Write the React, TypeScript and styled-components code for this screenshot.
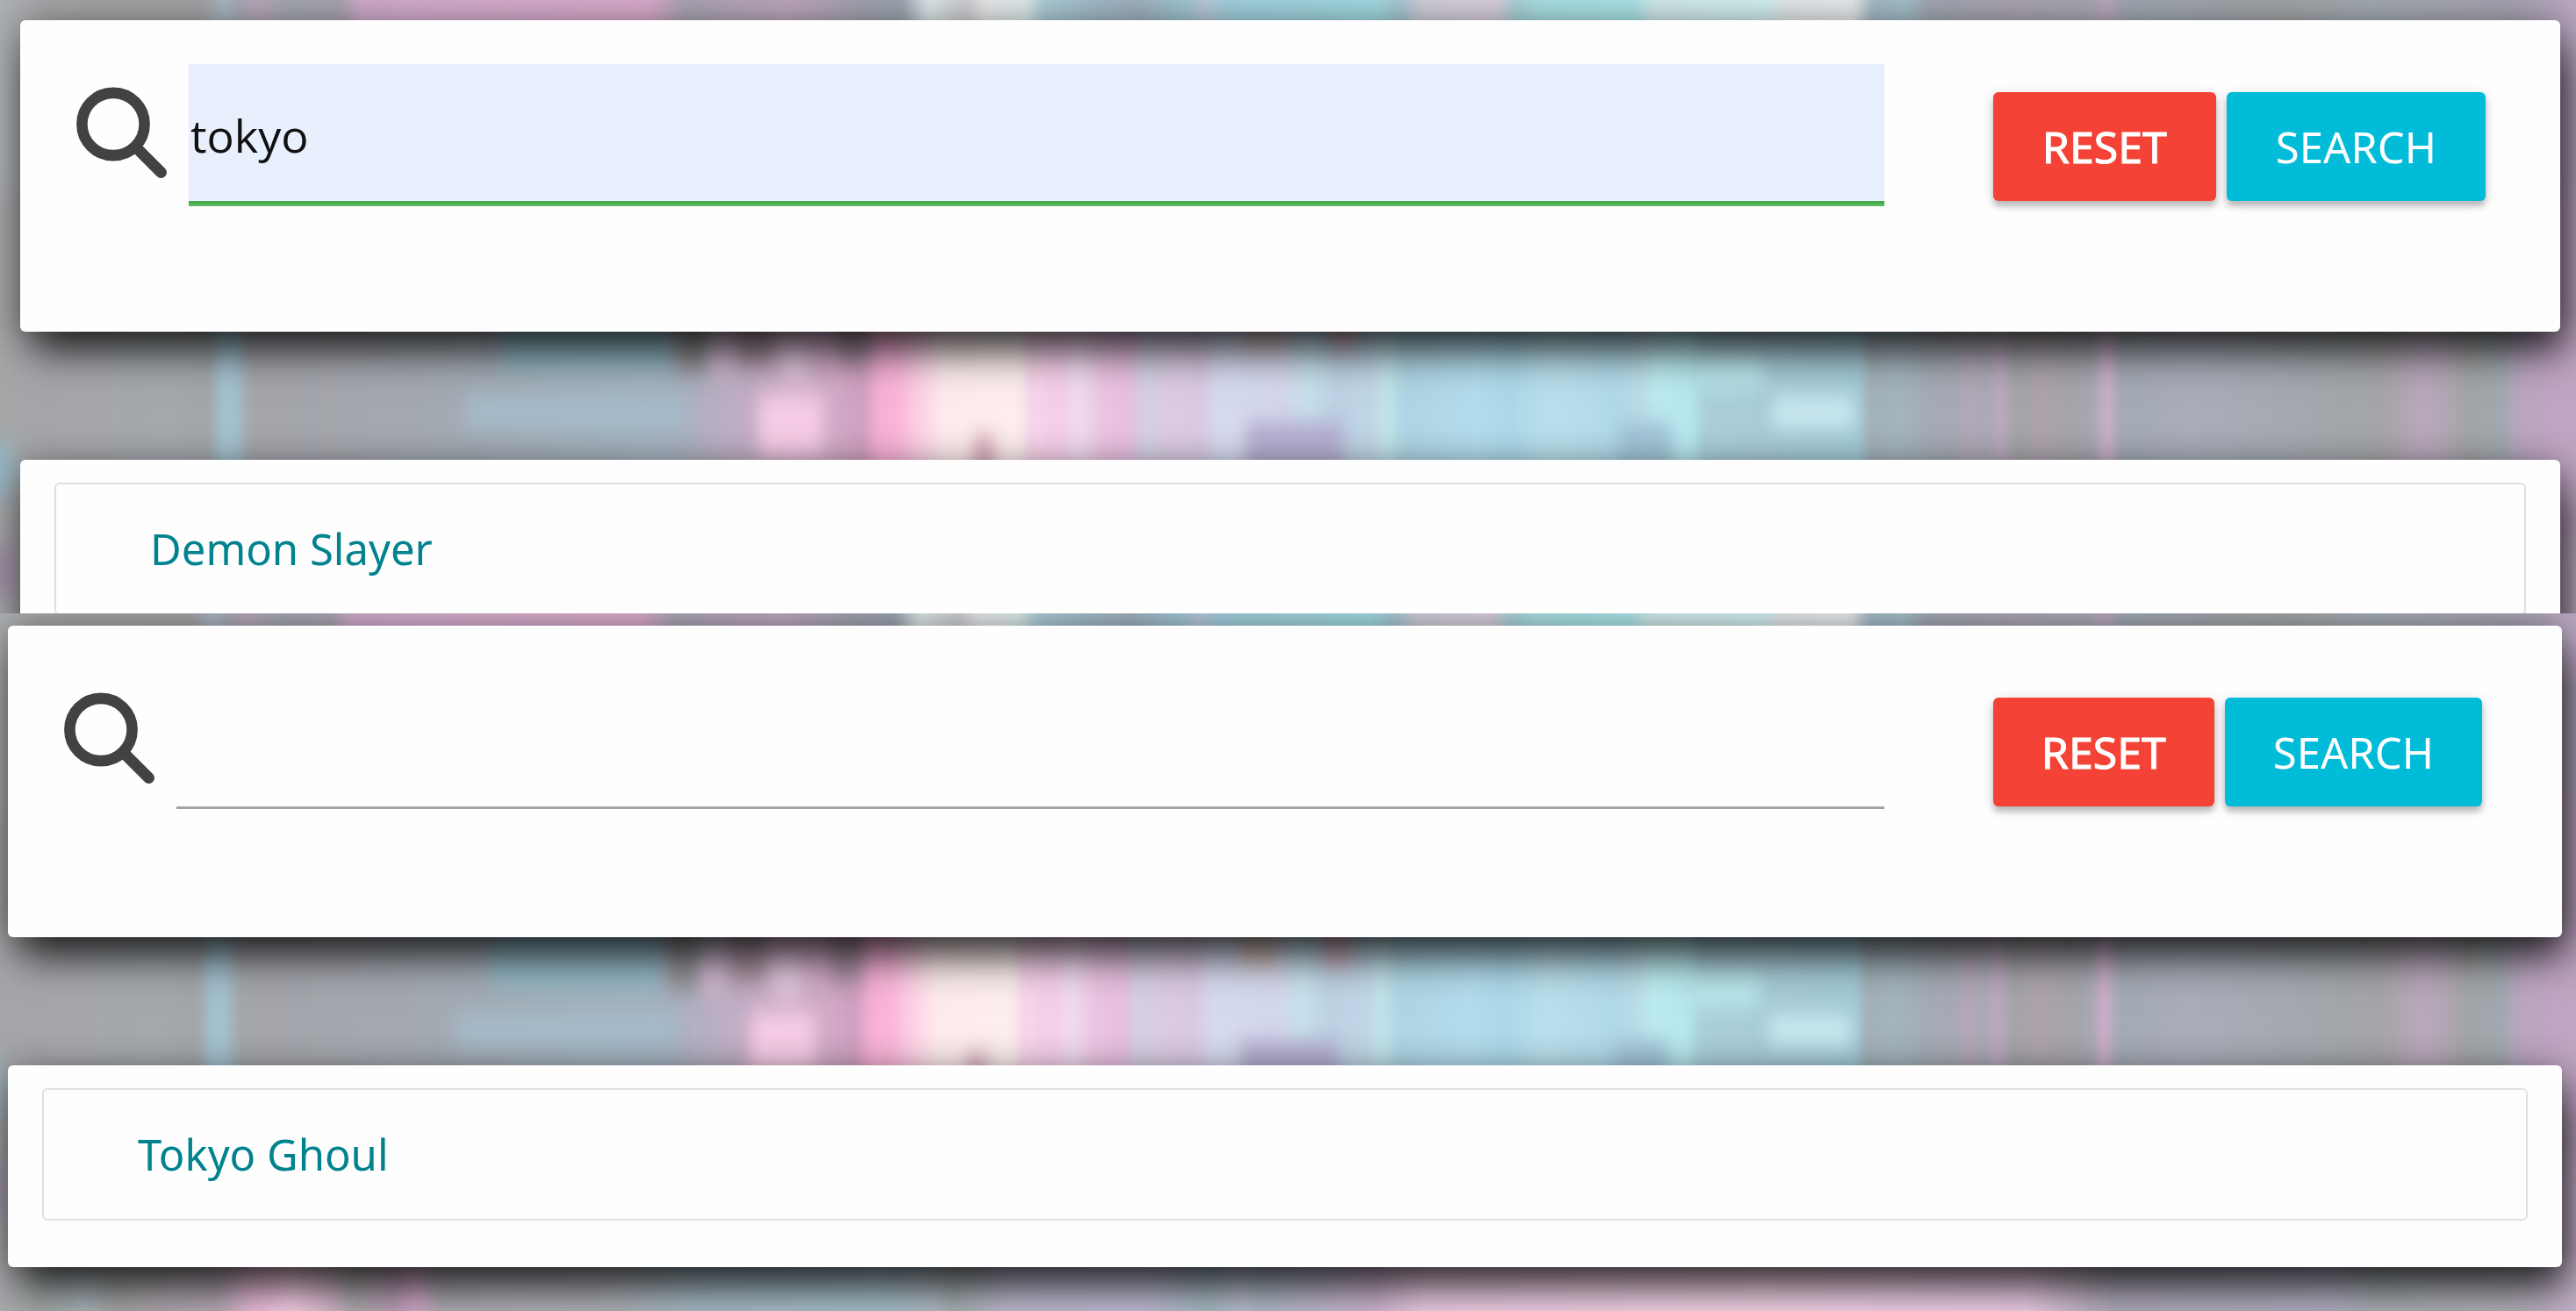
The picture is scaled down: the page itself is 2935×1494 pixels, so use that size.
import React, { useId, useState } from "react";
import styled, { createGlobalStyle } from "styled-components";

const GlobalStyle = createGlobalStyle`
  *, *::before, *::after { box-sizing: border-box; }
  body {
    margin: 0;
    background: #a3a6aa;
    font-family: "Noto Sans", "Open Sans", sans-serif;
  }
`;

type Stop = [number, string];

const upperStops: Stop[] = [
  [0, "#adb0b3"], [60, "#a5a5a7"], [230, "#a3a3a5"], [255, "#a9b6c3"], [275, "#a8a8b5"],
  [290, "#b9a8b9"], [330, "#a3a6b0"], [390, "#aaa5b0"], [410, "#cfaaca"], [500, "#d4aecd"],
  [740, "#d9aacb"], [780, "#aaa4b2"], [900, "#bca6bd"], [975, "#a3a3af"], [1028, "#9aa4ae"],
  [1057, "#dde8e9"], [1099, "#cbcbd0"], [1124, "#e6e7e9"], [1169, "#dce9ea"], [1190, "#aacbd5"],
  [1248, "#a0b9c7"], [1298, "#a0b0be"], [1348, "#9cc4d1"], [1373, "#b9c7da"], [1398, "#a0cfdc"],
  [1480, "#a1d2dd"], [1563, "#a0dae0"], [1597, "#a7c7d3"], [1621, "#d0ced8"], [1704, "#d8ceda"],
  [1729, "#a7d1d7"], [1754, "#a9dee2"], [1862, "#a9e3e6"], [1883, "#d0e8ea"], [2011, "#d0eeef"],
  [2036, "#e2e6e9"], [2111, "#e6e9eb"], [2135, "#a1b7c3"], [2170, "#a3bec7"], [2200, "#a0a7b1"],
  [2300, "#aaa4b1"], [2380, "#a7a7b1"], [2400, "#b9a7be"], [2420, "#a0a7b1"], [2600, "#a0a4a7"],
  [2700, "#a3aab1"], [2860, "#a7a3b1"], [2935, "#b9a7c1"],
];

const middleStops: Stop[] = [
  [0, "#a5a6a8"], [100, "#a5a7ab"], [190, "#a4a9ae"], [238, "#a3a6aa"], [253, "#a3c1cf"],
  [267, "#a3c1cf"], [286, "#a4a6ab"], [400, "#a5a7ae"], [500, "#a4aab2"], [600, "#a4aeb8"],
  [700, "#a4b2be"], [770, "#a8b2c0"], [800, "#b3b0c2"], [860, "#c5aec6"], [900, "#d2b2cb"],
  [950, "#d2abc8"], [982, "#d09fc0"], [1002, "#f7b0d6"], [1022, "#f9b5d8"], [1045, "#fdcde4"],
  [1075, "#fdebec"], [1160, "#fdeeee"], [1173, "#f6d6e9"], [1205, "#f5cde9"], [1230, "#f0dbef"],
  [1256, "#ebc4e2"], [1288, "#e6bfdf"], [1304, "#d3d1e4"], [1333, "#dccbe2"], [1365, "#d8c9e1"],
  [1390, "#d6daf0"], [1460, "#d5d8ec"], [1492, "#c6e1ec"], [1524, "#bdd1e3"], [1562, "#c0d6e7"],
  [1581, "#c2e4ea"], [1600, "#aed5e4"], [1683, "#b3dcec"], [1722, "#abd8e8"], [1766, "#bae0ec"],
  [1843, "#b0d9e8"], [1868, "#bcdde8"], [1890, "#bcecf1"], [1926, "#b6e8ee"], [1942, "#aacfdb"],
  [2012, "#a8ccd8"], [2118, "#a3cbd7"], [2130, "#a3b0b8"], [2164, "#a4b4bd"], [2197, "#a4acb5"],
  [2230, "#a8a9b4"], [2246, "#b5a8b9"], [2263, "#a8a9b2"], [2279, "#bda9c1"], [2296, "#a3a5a8"],
  [2326, "#aea3ae"], [2362, "#a3a6aa"], [2386, "#a8a8b2"], [2400, "#d0afcd"], [2416, "#a4aab4"],
  [2494, "#a8adb9"], [2679, "#a3a7ab"], [2718, "#a9a4aa"], [2758, "#b8a8bb"], [2788, "#b2a6b5"],
  [2811, "#a3a5a5"], [2850, "#a2a8b0"], [2870, "#b8a6bf"], [2916, "#c2a5c4"], [2935, "#bda6c2"],
];

const lowerStops: Stop[] = [
  [0, "#a9a9ad"], [60, "#a3a7a7"], [110, "#aab5bc"], [140, "#a7a7a7"], [260, "#b7aab7"],
  [300, "#ecbeda"], [345, "#f7d0e6"], [385, "#d9b9ce"], [412, "#b0adb0"], [460, "#bca0b8"],
  [486, "#d5accb"], [512, "#b0adb5"], [712, "#b0b3ba"], [800, "#a9bdc7"], [1012, "#a9c2cd"],
  [1072, "#b3bdc7"], [1092, "#a9b3b5"], [1162, "#c2bdd3"], [1312, "#c2bdd6"], [1382, "#a9bcc5"],
  [1422, "#bdc0d0"], [1442, "#b0bdc9"], [1572, "#d0b7d3"], [1630, "#f0d0e6"], [2010, "#f6d6e9"],
  [2310, "#f0d0e9"], [2380, "#c2b5c5"], [2410, "#b3adbd"], [2660, "#b3b0c2"], [2710, "#a9b0b5"],
  [2860, "#b3b0b9"], [2935, "#c4b1c8"],
];

/* Soft spots laid over the stripes: x, y, width, height, colour. */
const spots: [number, number, number, number, string][] = [
  [570, 350, 195, 72, "#93b9c6"],
  [530, 450, 250, 40, "#a5bac9"],
  [770, 340, 36, 84, "#929295"],
  [840, 340, 40, 76, "#a9929f"],
  [812, 380, 22, 50, "#d2b6cd"],
  [892, 385, 28, 46, "#e0c8dd"],
  [955, 340, 34, 76, "#a68fa0"],
  [865, 450, 72, 70, "#f6cbe5"],
  [1110, 496, 22, 60, "#d3a5b7"],
  [1420, 480, 110, 80, "#b5aed0"],
  [1845, 480, 60, 60, "#a0c3d6"],
  [1925, 405, 84, 38, "#b8e6eb"],
  [2020, 452, 92, 36, "#c9e8f0"],
  [1420, 340, 40, 56, "#d9c5c0"],
  [1515, 340, 30, 56, "#d9b6c3"],
  [-20, 505, 36, 60, "#96b6c3"],
  [-20, 620, 38, 60, "#a08fa6"],
];

const BackdropArt = styled.svg`
  position: absolute;
  inset: 0;
  z-index: -1;
  width: 100%;
  height: 100%;
`;

function Stripes({ id, stops }: { id: string; stops: Stop[] }) {
  return (
    <linearGradient id={id} gradientUnits="userSpaceOnUse" x1="0" x2="2935" y1="0" y2="0">
      {stops.map(([x, color]) => (
        <stop key={x} offset={x / 2935} stopColor={color} />
      ))}
    </linearGradient>
  );
}

function Backdrop({ viewBox }: { viewBox: string }) {
  const id = useId();
  return (
    <BackdropArt viewBox={viewBox} preserveAspectRatio="none" aria-hidden="true">
      <defs>
        <Stripes id={`${id}u`} stops={upperStops} />
        <Stripes id={`${id}m`} stops={middleStops} />
        <Stripes id={`${id}l`} stops={lowerStops} />
        <filter
          id={`${id}g`}
          filterUnits="userSpaceOnUse"
          x="-100"
          y="-100"
          width="3135"
          height="1100"
          colorInterpolationFilters="sRGB"
        >
          <feGaussianBlur stdDeviation="4 16" />
        </filter>
        <filter
          id={`${id}b`}
          x="-100%"
          y="-100%"
          width="300%"
          height="300%"
          colorInterpolationFilters="sRGB"
        >
          <feGaussianBlur stdDeviation="9 12" />
        </filter>
      </defs>
      <g filter={`url(#${id}g)`}>
        <rect x="-100" y="-100" width="3135" height="320" fill={`url(#${id}u)`} />
        <rect x="-100" y="220" width="3135" height="400" fill={`url(#${id}m)`} />
        <rect x="-100" y="620" width="3135" height="380" fill={`url(#${id}l)`} />
      </g>
      {spots.map(([x, y, width, height, fill]) => (
        <rect
          key={`${x}-${y}`}
          x={x}
          y={y}
          width={width}
          height={height}
          fill={fill}
          filter={`url(#${id}b)`}
        />
      ))}
    </BackdropArt>
  );
}

const Page = styled.main`
  display: flex;
  flex-direction: column;
  height: 100vh;
  overflow: hidden;
`;

const Panel = styled.section<{ $inset: string; $clip?: boolean }>`
  position: relative;
  isolation: isolate;
  display: flex;
  flex-direction: column;
  gap: 146px;
  flex: ${(p) => (p.$clip ? "0 0 699px" : "1 0 auto")};
  padding: ${(p) => p.$inset};
  overflow: hidden;
`;

const Card = styled.div`
  flex: none;
  background: #fefefe;
  border-radius: 6px;
  box-shadow:
    0 4px 40px rgba(0, 0, 0, 0.36),
    10px 28px 44px -6px rgba(0, 0, 0, 0.74);
`;

const SearchForm = styled(Card).attrs({ as: "form" })<{ $end: number }>`
  display: flex;
  align-items: flex-start;
  padding: 50px ${(p) => p.$end}px 146px 64px;
`;

const IconLabel = styled.label`
  flex: none;
  width: 104px;
  margin: 26px 24px 0 0;

  svg {
    display: block;
    width: 100%;
  }
`;

const SearchInput = styled.input<{ $valid: boolean }>`
  flex: 1;
  min-width: 0;
  height: 159px;
  padding: 4px 0 0 2px;
  border: 0;
  border-bottom: 3px solid ${(p) => (p.$valid ? "#43ac47" : "#a3a5a4")};
  border-radius: 0;
  outline: 0;
  background: ${(p) => (p.$valid ? "#e8effd" : "transparent")};
  box-shadow: ${(p) => (p.$valid ? "0 3px 0 #5cb860" : "none")};
  color: #111;
  font: 400 52px "Open Sans", "Noto Sans", sans-serif;
`;

const Actions = styled.div`
  display: flex;
  flex: none;
  gap: 12px;
  margin: 32px 0 0 124px;
`;

const Button = styled.button<{ $tone: string; $pad: number; $strong?: boolean }>`
  height: 124px;
  padding: 0 ${(p) => p.$pad}px;
  border: 0;
  border-radius: 6px;
  background: ${(p) => p.$tone};
  box-shadow:
    0 6px 6px rgba(0, 0, 0, 0.2),
    0 3px 16px rgba(0, 0, 0, 0.14);
  color: #fff;
  font-family: "Noto Sans", sans-serif;
  font-size: ${(p) => (p.$strong ? 50 : 49)}px;
  font-weight: 400;
  -webkit-text-stroke: ${(p) => (p.$strong ? "1px #fff" : "0")};
  text-transform: uppercase;
  cursor: pointer;
`;

const Results = styled(Card)`
  padding: 26px 39px 53px;
`;

const ResultList = styled.ul`
  margin: 0;
  padding: 0;
  border: 2px solid #e0e0e0;
  border-radius: 6px;
  list-style: none;
`;

const ResultItem = styled.li`
  padding: 38px 107px;
  font-size: 49px;
  line-height: 71px;
`;

const ResultLink = styled.a`
  color: #00838f;
  text-decoration: none;
`;

function SearchIcon() {
  return (
    <svg viewBox="0 0 104 104" fill="none" stroke="#424242" aria-hidden="true">
      <circle cx="42" cy="42.5" r="35.6" strokeWidth="12.6" />
      <path d="M68 69 L96.5 97.5" strokeWidth="13" strokeLinecap="round" />
    </svg>
  );
}

interface SearchViewProps {
  initial: string;
  result: string;
  inset: string;
  end: number;
  buttonPad: number;
  viewBox: string;
  clip?: boolean;
}

function SearchView({ initial, result, inset, end, buttonPad, viewBox, clip }: SearchViewProps) {
  const [term, setTerm] = useState(initial);
  const inputId = useId();
  return (
    <Panel $inset={inset} $clip={clip}>
      <Backdrop viewBox={viewBox} />
      <SearchForm $end={end} onSubmit={(e: React.FormEvent) => e.preventDefault()}>
        <IconLabel htmlFor={inputId} aria-label="Search">
          <SearchIcon />
        </IconLabel>
        <SearchInput
          id={inputId}
          type="text"
          value={term}
          $valid={term !== ""}
          onChange={(e) => setTerm(e.target.value)}
        />
        <Actions>
          <Button type="button" $tone="#f44336" $pad={buttonPad} $strong onClick={() => setTerm("")}>
            Reset
          </Button>
          <Button type="submit" $tone="#00bcd8" $pad={buttonPad}>
            Search
          </Button>
        </Actions>
      </SearchForm>
      <Results>
        <ResultList>
          <ResultItem>
            <ResultLink href="#">{result}</ResultLink>
          </ResultItem>
        </ResultList>
      </Results>
    </Panel>
  );
}

export default function App() {
  return (
    <>
      <GlobalStyle />
      <Page>
        <SearchView
          clip
          initial="tokyo"
          result="Demon Slayer"
          inset="23px 18px 0 23px"
          end={85}
          buttonPad={56}
          viewBox="0 0 2935 699"
        />
        <SearchView
          initial=""
          result="Tokyo Ghoul"
          inset="14px 16px 50px 9px"
          end={91}
          buttonPad={55}
          viewBox="13 -6 2922 795"
        />
      </Page>
    </>
  );
}
